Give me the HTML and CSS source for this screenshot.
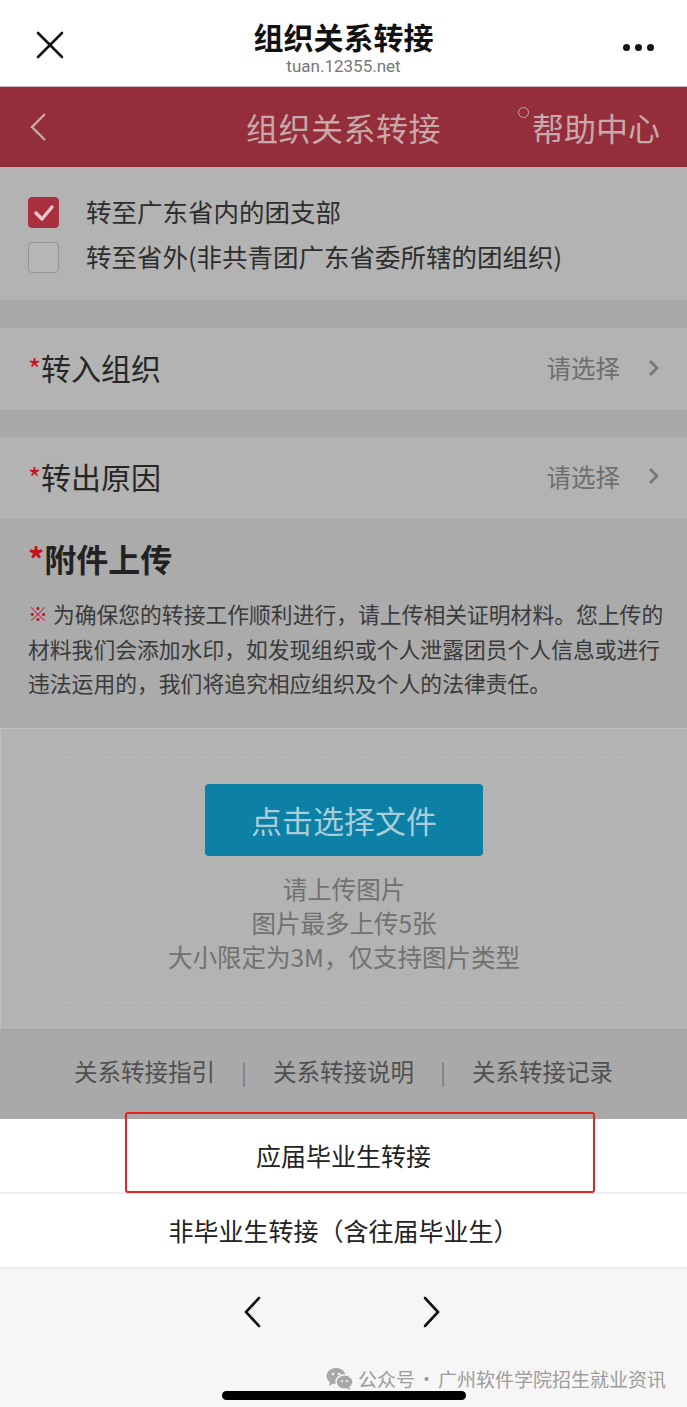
FILE: index.html
```html
<!DOCTYPE html>
<html lang="zh-CN">
<head>
<meta charset="utf-8">
<title>组织关系转接</title>
<link rel="stylesheet" href="styles.css">
</head>
<body>
<div class="screen">
  <header class="topbar">
    <div class="tb-left">
      <svg class="ico-close" width="28" height="28" viewBox="0 0 28 28"><path d="M2 2 L26 26 M26 2 L2 26" stroke="#111" stroke-width="2.6" stroke-linecap="round" fill="none"/></svg>
    </div>
    <div class="tb-title">
      <div class="tb-name">组织关系转接</div>
      <div class="tb-url">tuan.12355.net</div>
    </div>
    <div class="tb-right">
      <span class="dot"></span><span class="dot"></span><span class="dot"></span>
    </div>
  </header>

  <div class="redbar">
    <div class="rb-left">
      <svg width="18" height="30" viewBox="0 0 18 30"><path d="M16 2 L3 15 L16 28" stroke="#c7a8ab" stroke-width="2.4" fill="none"/></svg>
    </div>
    <div class="rb-title">组织关系转接</div>
    <div class="rb-right"><span class="rb-circle"></span>帮助中心</div>
  </div>

  <section class="choices">
    <label class="choice"><span class="cb cb-on"><svg width="22" height="18" viewBox="0 0 22 18"><path d="M3 9 L9 15 L19 3" stroke="#e6c9cc" stroke-width="3.4" fill="none" stroke-linecap="round" stroke-linejoin="round"/></svg></span><span class="choice-text">转至广东省内的团支部</span></label>
    <label class="choice"><span class="cb"></span><span class="choice-text">转至省外(非共青团广东省委所辖的团组织)</span></label>
  </section>

  <div class="band band-first"></div>
  <div class="row">
    <div class="row-label"><span class="star">*</span>转入组织</div>
    <div class="row-value">请选择<svg width="12" height="18" viewBox="0 0 12 18"><path d="M2 2 L9 9 L2 16" stroke="#757575" stroke-width="2.6" fill="none"/></svg></div>
  </div>
  <div class="band"></div>
  <div class="row row-last">
    <div class="row-label"><span class="star">*</span>转出原因</div>
    <div class="row-value">请选择<svg width="12" height="18" viewBox="0 0 12 18"><path d="M2 2 L9 9 L2 16" stroke="#757575" stroke-width="2.6" fill="none"/></svg></div>
  </div>

  <section class="attach">
    <h2 class="attach-title"><span class="star">*</span>附件上传</h2>
    <p class="notice"><span class="mark">※</span> 为确保您的转接工作顺利进行，请上传相关证明材料。您上传的<br>材料我们会添加水印，如发现组织或个人泄露团员个人信息或进行<br>违法运用的，我们将追究相应组织及个人的法律责任。</p>
  </section>

  <section class="upload">
    <div class="upload-inner">
      <div class="btn">点击选择文件</div>
      <div class="hints">
        <div>请上传图片</div>
        <div>图片最多上传5张</div>
        <div>大小限定为3M，仅支持图片类型</div>
      </div>
    </div>
  </section>

  <nav class="links">
    <span>关系转接指引</span><span class="sep">|</span><span>关系转接说明</span><span class="sep">|</span><span>关系转接记录</span>
  </nav>

  <div class="sheet">
    <div class="sheet-item">应届毕业生转接</div>
    <div class="sheet-item">非毕业生转接（含往届毕业生）</div>
    <div class="highlight"></div>
  </div>

  <footer class="toolbar">
    <div class="tool-nav">
      <svg width="20" height="32" viewBox="0 0 20 32"><path d="M17 2 L4 16 L17 30" stroke="#111" stroke-width="2.6" fill="none" stroke-linecap="round"/></svg>
      <svg width="20" height="32" viewBox="0 0 20 32"><path d="M3 2 L16 16 L3 30" stroke="#111" stroke-width="2.6" fill="none" stroke-linecap="round"/></svg>
    </div>
    <div class="watermark">
      <svg width="28" height="24" viewBox="0 0 28 24"><ellipse cx="10" cy="9" rx="9.5" ry="8" fill="#a8a8a8"/><path d="M4 15 L3 19 L8 16 Z" fill="#a8a8a8"/><ellipse cx="18.5" cy="15" rx="8.5" ry="7.2" fill="#a8a8a8" stroke="#f6f6f6" stroke-width="1.5"/><path d="M23 20 L25 23 L20 21 Z" fill="#a8a8a8"/><circle cx="7" cy="7" r="1.3" fill="#f6f6f6"/><circle cx="13" cy="7" r="1.3" fill="#f6f6f6"/><circle cx="16" cy="14" r="1.1" fill="#f6f6f6"/><circle cx="21" cy="14" r="1.1" fill="#f6f6f6"/></svg>
      <span>公众号<span class="wm-dot">·</span>广州软件学院招生就业资讯</span>
    </div>
    <div class="home-indicator"></div>
  </footer>
</div>
</body>
</html>
```

FILE: styles.css
```css
* { box-sizing: border-box; }
html, body { margin: 0; padding: 0; }
body {
  width: 687px;
  height: 1407px;
  overflow: hidden;
  font-family: "Noto Sans CJK SC", "Noto Sans", sans-serif;
  background: #f6f6f6;
}
.screen {
  width: 687px;
  height: 1407px;
  display: flex;
  flex-direction: column;
  position: relative;
}

/* top white navigation */
.topbar {
  height: 87px;
  background: #fff;
  display: grid;
  grid-template-columns: 1fr auto 1fr;
  align-items: center;
  border-bottom: 1px solid #cdb9bb;
}
.tb-left { padding-left: 36px; display: flex; align-items: center; padding-top: 4px; }
.tb-title { display: flex; flex-direction: column; align-items: center; padding-top: 8px; }
.tb-name { font-size: 30px; font-weight: 700; color: #111; line-height: 36px; }
.tb-url { font-family: Roboto, "Liberation Sans", sans-serif; font-size: 17px; color: #777; line-height: 22px; margin-top: 1px; }
.tb-right { justify-self: end; padding-right: 33px; display: flex; gap: 5px; padding-top: 8px; }
.dot { width: 7px; height: 7px; border-radius: 50%; background: #111; }

/* red page header */
.redbar {
  height: 80px;
  background: #952e3b;
  display: grid;
  grid-template-columns: 1fr auto 1fr;
  align-items: center;
  color: #c7a8ab;
}
.rb-left { padding-left: 29px; display: flex; align-items: center; }
.rb-title { font-size: 32px; line-height: 40px; letter-spacing: 0.5px; }
.rb-right { justify-self: end; padding-right: 27px; font-size: 32px; line-height: 40px; display: flex; align-items: flex-start; }
.rb-circle {
  width: 11px; height: 11px; border: 1.6px solid #c7a8ab; border-radius: 50%;
  margin-right: 3px;
}

/* checkbox choices */
.choices {
  background: #b3b3b3;
  padding: 30px 0 27px 28px;
  display: flex;
  flex-direction: column;
  gap: 14px;
}
.choice {
  display: flex;
  align-items: center;
  gap: 27px;
  font-size: 25.5px;
  line-height: 31px;
  color: #2e2e2e;
}
.choice-text { position: relative; top: -2px; }
.cb {
  width: 31px; height: 31px;
  border: 1.5px solid #959595;
  border-radius: 4px;
  background: #b6b6b6;
  display: flex; align-items: center; justify-content: center;
}
.cb-on { background: #a72f3e; border-color: #a72f3e; }

.band { height: 27px; background: #a9a9a9; }
.band-first { height: 28px; }

.row {
  height: 82px;
  background: #b3b3b3;
  display: flex;
  align-items: center;
  justify-content: space-between;
  padding: 0 27px 3px 28px;
}
.row-last { height: 81px; }
.row-label { font-size: 30px; color: #262626; line-height: 40px; }
.star { color: #c4111b; }
.row .star { font-size: 28px; }
.row-value { display: flex; align-items: center; gap: 28px; font-size: 24.5px; color: #6e6e6e; }

/* attachment */
.attach {
  background: #ababab;
  padding: 18px 28px 27px 28px;
}
.attach-title { margin: 0; font-size: 32px; font-weight: 700; color: #222; line-height: 44px; }
.notice {
  margin: 17px 0 0 0;
  font-size: 21.8px;
  line-height: 34.5px;
  color: #3a3a3a;
  white-space: nowrap;
}
.mark { color: #c4111b; vertical-align: top; font-size: 20px; }

/* upload box */
.upload {
  height: 302px;
  background: #b3b3b3;
  border-top: 1px solid #c2c2c2;
  border-left: 1px solid #c2c2c2;
  border-bottom: 1px solid #a4a4a4;
  padding: 28px 28px 26px 28px;
}
.upload-inner {
  height: 100%;
  border-top: 1px dashed #bdbdbd;
  border-bottom: 1px dashed #bdbdbd;
  display: flex;
  flex-direction: column;
  align-items: center;
  padding-top: 26px;
}
.btn {
  width: 278px; height: 72px;
  background: #0d80a6;
  border-radius: 4px;
  color: #a8cedb;
  font-size: 31px;
  display: flex; align-items: center; justify-content: center;
}
.hints {
  margin-top: 16px;
  display: flex; flex-direction: column; align-items: center;
  font-size: 24.5px; line-height: 34px; color: #717171;
}

/* links */
.links {
  height: 89px;
  background: #a9a9a9;
  display: flex;
  align-items: center;
  justify-content: center;
  gap: 26px;
  font-size: 23.5px;
  color: #505050;
  padding-bottom: 6px;
}
.sep { color: #7a7a7a; font-size: 22px; }

/* action sheet */
.sheet { background: #fff; position: relative; }
.sheet-item {
  height: 75px;
  display: flex; align-items: center; justify-content: center;
  font-size: 25px; color: #222;
  border-bottom: 2px solid #efefef;
}
.highlight {
  position: absolute;
  left: 125px; top: -7px;
  width: 470px; height: 81px;
  border: 2.5px solid #e8231f;
  border-radius: 3px;
}

/* bottom toolbar */
.toolbar {
  flex: 1;
  background: #f6f6f6;
  position: relative;
}
.tool-nav {
  display: flex;
  justify-content: center;
  gap: 160px;
  padding-top: 27px;
  padding-right: 3px;
}
.watermark {
  position: absolute;
  right: 21px; bottom: 15px;
  display: flex; align-items: center; gap: 4px;
  font-size: 19px; color: #9c9c9c;
}
.wm-dot { margin: 0 2px; }
.home-indicator {
  position: absolute;
  left: 222px; bottom: 7px;
  width: 244px; height: 9px;
  border-radius: 5px;
  background: #000;
}
```
